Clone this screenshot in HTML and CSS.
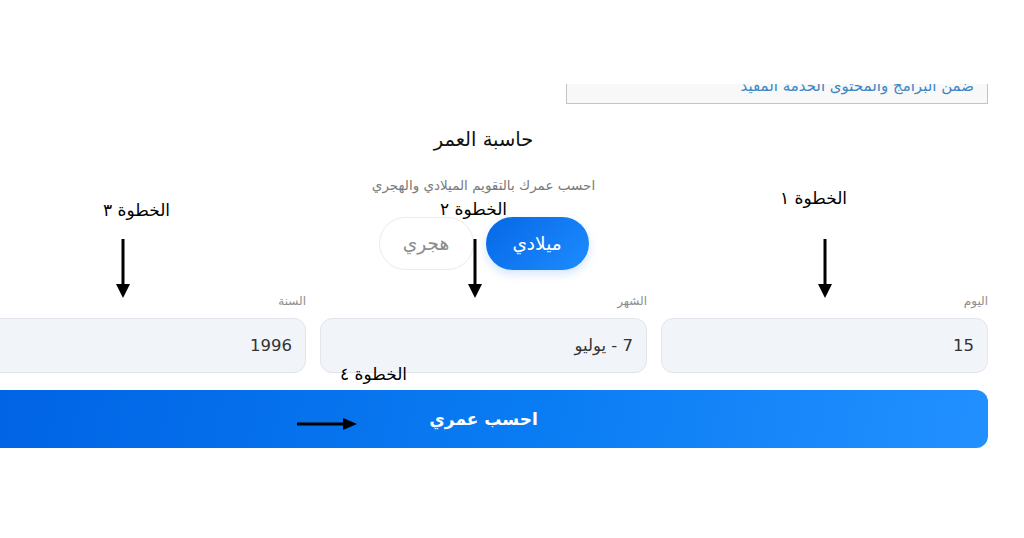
FILE: index.html
```html
<!DOCTYPE html>
<html lang="ar">
<head>
  <meta charset="UTF-8" />
  <meta name="viewport" content="width=device-width, initial-scale=1.0"/>
  <title>حاسبة العمر</title>
  <link rel="stylesheet" href="styles.css">
</head>
<body>

  <div class="page" dir="rtl">
    <div class="notice">
      <p>ضمن البرامج والمحتوى الخدمة المفيد</p>
    </div>

    <section class="calc" aria-label="حاسبة العمر">
      <h1 class="calc-title">حاسبة العمر</h1>
      <p class="calc-sub">احسب عمرك بالتقويم الميلادي والهجري</p>

      <div class="toggle">
        <button class="toggle-btn active">ميلادي</button>
        <button class="toggle-btn">هجري</button>
      </div>

      <div class="fields">
        <div class="field">
          <label class="field-label">اليوم</label>
          <div class="field-input">15</div>
        </div>
        <div class="field">
          <label class="field-label">الشهر</label>
          <div class="field-input">7 - يوليو</div>
        </div>
        <div class="field">
          <label class="field-label">السنة</label>
          <div class="field-input">1996</div>
        </div>
      </div>

      <button class="submit">احسب عمري</button>
    </section>
  </div>

  <!-- step hints drawn over the form -->
  <div class="hints" dir="rtl">
    <span class="hint hint-1">الخطوة ١</span>
    <span class="hint hint-2">الخطوة ٢</span>
    <span class="hint hint-3">الخطوة ٣</span>
    <span class="hint hint-4">الخطوة ٤</span>

    <svg class="arrow arrow-1" width="16" height="60" viewBox="0 0 16 60">
      <line x1="8" y1="0" x2="8" y2="47" stroke="#000" stroke-width="3"/>
      <polygon points="1,45 15,45 8,59" fill="#000"/>
    </svg>
    <svg class="arrow arrow-2" width="16" height="60" viewBox="0 0 16 60">
      <line x1="8" y1="0" x2="8" y2="47" stroke="#000" stroke-width="3"/>
      <polygon points="1,45 15,45 8,59" fill="#000"/>
    </svg>
    <svg class="arrow arrow-3" width="16" height="60" viewBox="0 0 16 60">
      <line x1="8" y1="0" x2="8" y2="47" stroke="#000" stroke-width="3"/>
      <polygon points="1,45 15,45 8,59" fill="#000"/>
    </svg>
    <svg class="arrow arrow-4" width="62" height="14" viewBox="0 0 62 14">
      <line x1="0" y1="7" x2="48" y2="7" stroke="#000" stroke-width="3"/>
      <polygon points="46,1 46,13 60,7" fill="#000"/>
    </svg>
  </div>

</body>
</html>
```

FILE: styles.css
```css
* {
  box-sizing: border-box;
}

body {
  margin: 0;
  background: #ffffff;
  font-family: "DejaVu Sans", "Noto Sans", sans-serif;
  position: relative;
  overflow: hidden;
  height: 538px;
}

.page {
  width: 1009px;
  margin-left: -21px;
  padding-top: 84px;
}

/* box cut off by the top of the view */
.notice {
  width: 422px;
  height: 20px;
  overflow: hidden;
  background: #f8f8f8;
  border: 1px solid #c4c4c4;
  border-top: none;
}

.notice p {
  margin: -8px 0 0;
  padding-right: 13px;
  font-size: 15px;
  line-height: 20px;
  color: #3b86c6;
}

.calc {
  text-align: center;
}

.calc-title {
  margin: 22px 0 0;
  font-size: 19.5px;
  font-weight: normal;
  line-height: 28px;
  color: #111;
}

.calc-sub {
  margin: 21px 0 0;
  font-size: 13.5px;
  line-height: 20px;
  color: #7a7a7a;
}

.toggle {
  display: flex;
  justify-content: center;
  gap: 12px;
  margin-top: 22px;
}

.toggle-btn {
  height: 53px;
  padding: 0;
  border-radius: 27px;
  font-family: inherit;
  font-size: 18.5px;
  border: 1px solid #ebebeb;
  background: #fff;
  color: #8c8c8c;
  cursor: pointer;
}

.toggle-btn.active {
  width: 103px;
  border: none;
  color: #fff;
  background: linear-gradient(135deg, #0667e6, #1d8cff);
  box-shadow: 0 4px 10px rgba(10, 110, 230, 0.18);
}

.toggle-btn:not(.active) {
  width: 95px;
}

.fields {
  display: grid;
  grid-template-columns: repeat(3, 1fr);
  gap: 14px;
  margin-top: 23px;
  text-align: right;
}

.field-label {
  display: block;
  font-size: 12px;
  line-height: 16px;
  color: #8e8e8e;
  margin-bottom: 9px;
}

.field-input {
  height: 55px;
  padding: 0 13px;
  display: flex;
  align-items: center;
  background: #f1f5fa;
  border: 1px solid #e1e5eb;
  border-radius: 12px;
  font-size: 16.5px;
  color: #333;
}

.submit {
  width: 100%;
  height: 58px;
  margin-top: 17px;
  border: none;
  border-radius: 12px;
  background: linear-gradient(100deg, #0063e4, #0a7cf3 55%, #2290ff);
  color: #fff;
  font-family: inherit;
  font-size: 17px;
  font-weight: bold;
  cursor: pointer;
}

/* hints layer */
.hints {
  position: absolute;
  top: 0;
  left: 0;
  width: 1024px;
  height: 538px;
  pointer-events: none;
}

.hint {
  position: absolute;
  font-size: 17px;
  line-height: 24px;
  color: #000;
  white-space: nowrap;
}

.hint-1 { left: 780px; top: 186px; }
.hint-2 { left: 440px; top: 197px; }
.hint-3 { left: 103px; top: 198px; }
.hint-4 { left: 340px; top: 362px; }

.arrow {
  position: absolute;
}

.arrow-1 { left: 817px; top: 239px; }
.arrow-2 { left: 467px; top: 239px; }
.arrow-3 { left: 115px; top: 239px; }
.arrow-4 { left: 297px; top: 417px; }
```
